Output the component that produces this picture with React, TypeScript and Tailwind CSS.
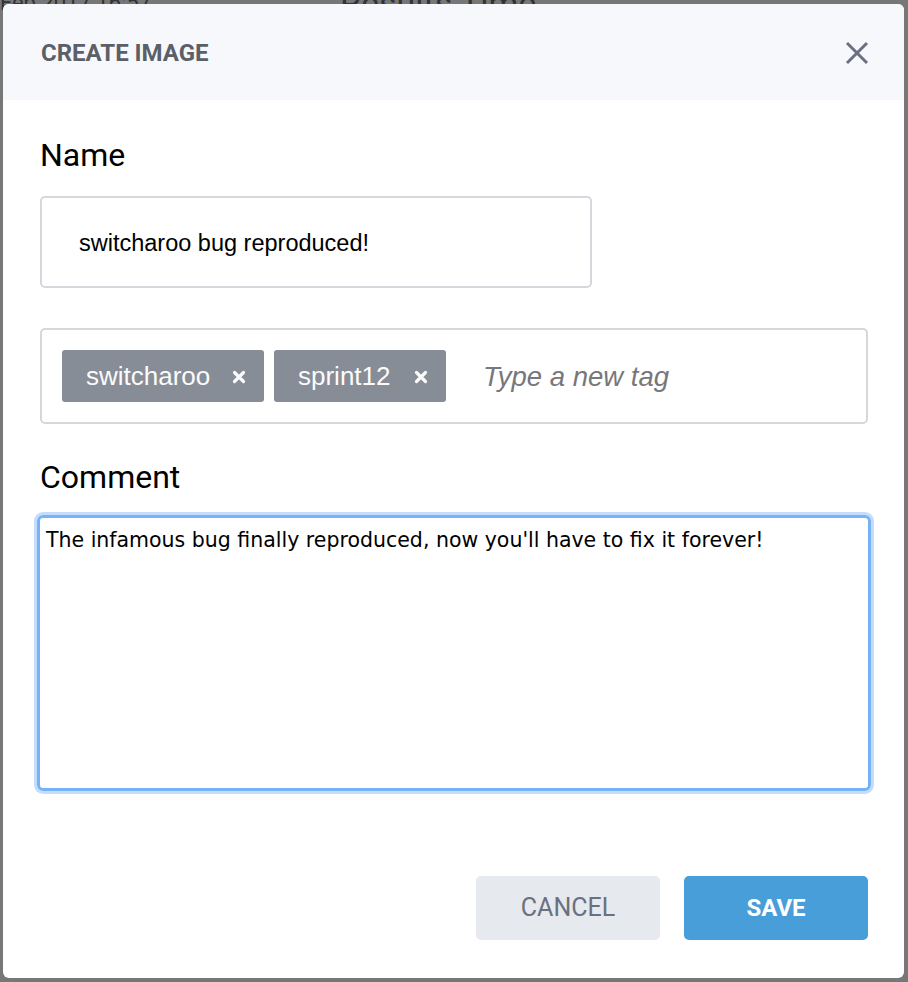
import React from "react";

function TagX() {
  return (
    <svg width="14" height="14" viewBox="0 0 14 14" className="mt-[2px]">
      <path d="M2.5 2.5 L11.5 11.5 M11.5 2.5 L2.5 11.5" stroke="#fbfbfc" strokeWidth="3.2" strokeLinecap="round" />
    </svg>
  );
}

export default function App() {
  return (
    <div className="relative w-[908px] h-[982px] bg-[#777777] overflow-hidden" style={{ fontFamily: "Roboto, sans-serif" }}>
      <div className="absolute left-0 top-[-14px] text-[22px] text-[#333] whitespace-nowrap">Feb 2017 16:57</div>
      <div className="absolute left-[340px] top-[-22px] text-[34px] text-[#333] whitespace-nowrap">Results Time</div>
      <div className="absolute left-[3px] top-[4px] w-[901px] h-[974px] bg-white rounded-[6px] flex flex-col overflow-hidden">
        <div className="h-[96px] bg-[#f7f8fb] flex items-center justify-between pl-[38px] pr-[34px] shrink-0">
          <div className="text-[24px] font-bold text-[#5b5f67] pt-[2px]">CREATE IMAGE</div>
          <svg width="26" height="26" viewBox="0 0 26 26" className="mt-[2px]">
            <path d="M3 3 L23 23 M23 3 L3 23" stroke="#6b7080" strokeWidth="3" strokeLinecap="butt" />
          </svg>
        </div>
        <div className="flex flex-col pl-[37px] pr-[37px]">
          <div className="mt-[37px] text-[32px] leading-[36px] text-black">Name</div>
          <div className="mt-[23px] w-[552px] h-[92px] border-2 border-[#d6d7dc] rounded-[5px] flex items-center pl-[37px]">
            <span className="text-[23.5px] text-black pt-[4px]" style={{ fontFamily: '"Liberation Sans", Arial, sans-serif' }}>switcharoo bug reproduced!</span>
          </div>
          <div className="mt-[40px] w-[828px] h-[96px] border-2 border-[#d6d7dc] rounded-[5px] flex items-center pl-[20px] gap-[10px]" style={{ fontFamily: '"Liberation Sans", Arial, sans-serif' }}>
            <div className="h-[52px] w-[202px] bg-[#878d97] rounded-[3px] flex items-center pl-[24px] text-[#fbfbfc] text-[26px]">
              <span>switcharoo</span>
              <span className="ml-[22px] flex"><TagX /></span>
            </div>
            <div className="h-[52px] w-[172px] bg-[#878d97] rounded-[3px] flex items-center pl-[24px] text-[#fbfbfc] text-[26px]">
              <span>sprint12</span>
              <span className="ml-[23px] flex"><TagX /></span>
            </div>
            <span className="ml-[27px] text-[27.5px] italic text-[#77777c] pt-[2px]">Type a new tag</span>
          </div>
          <div className="mt-[35px] text-[32px] leading-[36px] text-black">Comment</div>
          <div className="mt-[20px] -ml-[3px] w-[834px] h-[276px] rounded-[6px] border-[3px] border-[#78b2f6] shadow-[0_0_0_3px_#c4ddfc] pl-[6px] pt-[7px]">
            <span className="text-[20.5px] text-black" style={{ fontFamily: '"DejaVu Sans", Verdana, sans-serif' }}>
              The infamous bug finally reproduced, now you'll have to fix it forever!
            </span>
          </div>
        </div>
        <div className="mt-auto mb-[38px] flex justify-end gap-[24px] pr-[36px]">
          <button className="w-[184px] h-[64px] bg-[#e6e9ed] rounded-[5px] text-[25px] text-[#6b7080]">CANCEL</button>
          <button className="w-[184px] h-[64px] bg-[#489ed9] rounded-[5px] text-[24px] font-bold text-white">SAVE</button>
        </div>
      </div>
    </div>
  );
}
